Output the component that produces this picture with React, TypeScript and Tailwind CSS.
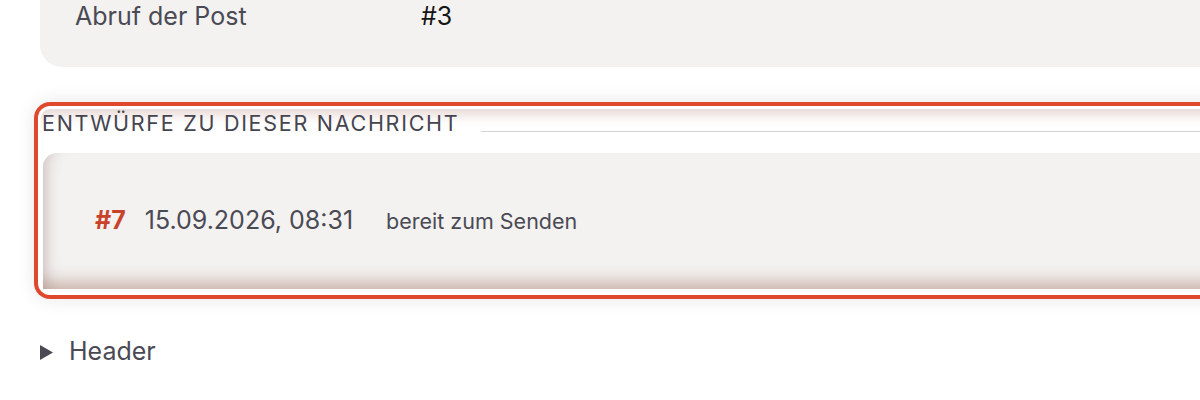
export default function App() {
  return (
    <div
      className="w-[1200px] h-[400px] overflow-hidden bg-white text-[#4a4a55]"
      style={{ fontFamily: "Inter, 'Noto Sans', sans-serif" }}
    >
      {/* top card (cut off) */}
      <div className="ml-[40px] w-[1200px] h-[67px] bg-[#f3f2f0] rounded-bl-[22px] flex items-start pl-[35px]">
        <div className="w-[346px] text-[25px] leading-[33px] text-[#4a4a55]">Abruf der Post</div>
        <div className="text-[25px] leading-[33px] text-[#151515]">#3</div>
      </div>

      {/* highlighted section */}
      <div className="mt-[42px] ml-[41px] w-[1200px] h-[183px] rounded-[9px] bg-white flex flex-col shadow-[0_0_0_3px_#ffffff,0_0_0_7px_#e0482d,0_0_18px_8px_rgba(0,0,0,0.09),inset_0_14px_12px_-8px_rgba(170,110,100,0.28)]">
        <div className="flex items-end h-[44px] pb-[18px]">
          <div className="text-[21.5px] leading-[24px] tracking-[0.08em] uppercase text-[#45454f] pl-[1px]">
            Entwürfe zu dieser Nachricht
          </div>
          <div className="flex-1 ml-[22px] mb-[3px] h-[1px] bg-[#d4d4d4]" />
        </div>
        <div className="ml-[2px] flex-1 mb-[3px] bg-[#f3f2f0] rounded-tl-[14px] flex items-center pl-[52px] shadow-[inset_16px_0_14px_-12px_rgba(120,80,70,0.25),inset_0_-18px_16px_-10px_rgba(160,110,95,0.45)]">
          <span className="text-[25px] font-bold text-[#c8432a]">#7</span>
          <span className="ml-[19px] text-[25px] text-[#4a4a55]">15.09.2026, 08:31</span>
          <span className="ml-[33px] text-[21.5px] text-[#4a4a55]">bereit zum Senden</span>
        </div>
      </div>

      {/* details */}
      <div className="mt-[46px] ml-[40px] flex items-center h-[28px]">
        <svg width="13" height="15" viewBox="0 0 13 15" className="shrink-0">
          <path d="M0 0 L13 7.5 L0 15 Z" fill="#4a4a55" />
        </svg>
        <span className="ml-[16px] text-[25px] text-[#4a4a55]">Header</span>
      </div>
    </div>
  );
}
